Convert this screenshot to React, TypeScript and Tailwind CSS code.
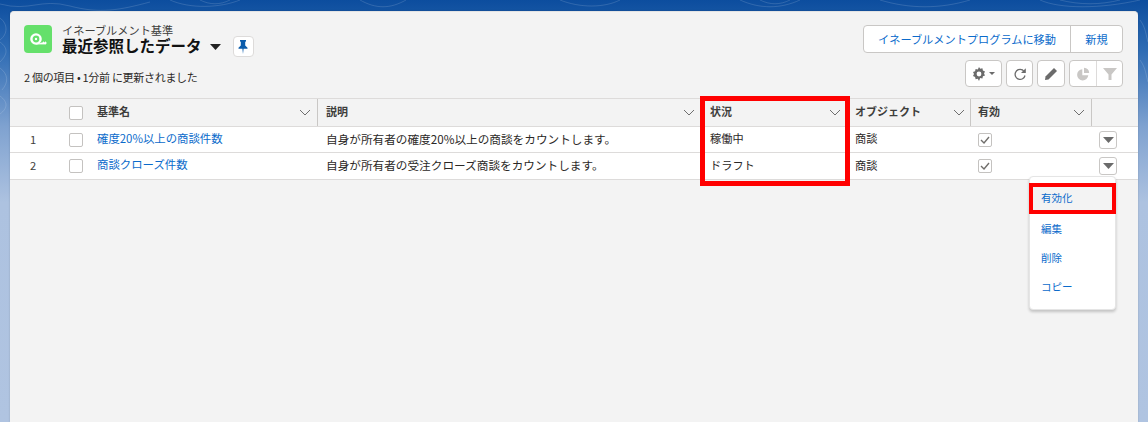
import React from "react";

const font = { fontFamily: '"Noto Sans CJK JP", "Noto Sans", sans-serif' };

function Chevron() {
  return (
    <svg width="12" height="7" viewBox="0 0 12 7" className="shrink-0">
      <path d="M1 1l5 5 5-5" fill="none" stroke="#6f6f6f" strokeWidth="1" />
    </svg>
  );
}

function Head({ label, className = "" }: { label: string; className?: string }) {
  return (
    <div className={`flex items-center justify-between font-bold text-[11px] text-[#3e3e3c] border-r border-[#c9c7c5] ${className}`}>
      <span className="-mt-[2px]">{label}</span>
      <Chevron />
    </div>
  );
}

function Box({ checked }: { checked?: boolean }) {
  return (
    <div className="w-[14px] h-[14px] bg-white border border-[#c4c2c0] rounded-[2px] flex items-center justify-center">
      {checked && (
        <svg width="10" height="8" viewBox="0 0 10 8">
          <path d="M1 4l3 3 5-6" fill="none" stroke="#706e6b" strokeWidth="1.4" />
        </svg>
      )}
    </div>
  );
}

function RowMenu() {
  return (
    <div className="w-[18px] h-[18px] bg-white border border-[#c9c7c5] rounded-[3px] flex items-center justify-center">
      <svg width="11" height="6" viewBox="0 0 11 6">
        <path d="M0 0h11L5.5 6z" fill="#6b6b6b" />
      </svg>
    </div>
  );
}

const cols = "grid grid-cols-[50px_28px_230px_383px_147px_123px_121px_1fr]";

function Row({ n, name, desc, status, tall }: { n: number; name: string; desc: string; status: string; tall?: boolean }) {
  return (
    <div className={`${cols} ${tall ? "h-[27px]" : "h-[26px]"} bg-white border-b border-[#dddbda] items-center text-[11.2px] text-[#2b2826]`}>
      <div className="pl-[20px] pb-[1px] text-[#3e3e3c]">{n}</div>
      <div className="pl-[9px]"><Box /></div>
      <a className="pl-[9px] pb-[2px] text-[11.4px] text-[#0b6bcb]">{name}</a>
      <div className="pl-[8px] pb-[2px] text-[11.65px]">{desc}</div>
      <div className="pl-[9px] pb-[2px]">{status}</div>
      <div className="pl-[7px] pb-[2px]">商談</div>
      <div className="pl-[7px]"><Box checked /></div>
      <div className="flex justify-end pr-[21px]"><RowMenu /></div>
    </div>
  );
}

const tool = "h-[27px] bg-white border border-[#c9c7c5] rounded-[4px] flex items-center justify-center";

export default function App() {
  return (
    <div
      style={font}
      className="relative w-[1148px] h-[422px] overflow-hidden pt-[11px] pl-[10px] pr-[10px] bg-[linear-gradient(180deg,#0c4d9e_0%,#2f6cb4_12%,#7fa2d0_30%,#adc2e0_48%,#b0c4e1_100%)]"
    >
      <svg className="absolute left-0 top-0" width="1148" height="120" viewBox="0 0 1148 120" fill="none" stroke="#ffffff" strokeOpacity="0.14" strokeWidth="1">
        <path d="M0 4c30 8 40-6 70 2s50 4 80-4M170 0c20 9 50 8 70 0M200 0c10 5 20 5 30 0M360 0c16 9 30 9 46 0M560 0c20 8 44 8 60 0M740 0c20 9 40 9 60 0M760 0c10 5 20 5 30 0M880 0c30 9 60 9 90 0M1040 0c20 9 60 9 100 0M1060 0c20 5 40 5 60 0" />
        <path d="M0 40c8-6 8-16 0-22M0 62c8-8 8-14 0-20M2 90c7-8 6-16-2-22M0 114c8-6 8-12 0-18M1140 20c6 8 6 16 8 22M1140 60c6 8 6 16 8 22" />
      </svg>

      <div className="relative h-[411px] bg-[#f3f3f3] rounded-t-[4px] border-t border-[#e4e4e4] shadow-[0_0_2px_rgba(0,0,0,0.2)]">
        <div className="h-[86px] flex justify-between pl-[14px] pr-[15px] pt-[13px]">
          <div>
            <div className="flex">
              <div className="w-[28px] h-[28px] rounded-[4px] bg-[#65e06b] flex items-center justify-center">
                <svg width="20" height="20" viewBox="0 0 20 20">
                  <circle cx="8" cy="10" r="4.6" fill="none" stroke="#fff" strokeWidth="2.4" />
                  <circle cx="8" cy="10" r="1.2" fill="#fff" />
                  <path d="M8 15h10v-2h-1v1h-1v-1h-1v1h-2" fill="#fff" stroke="#fff" strokeWidth="0.8" />
                </svg>
              </div>
              <div className="ml-[10px] -mt-[1px]">
                <div className="text-[11.2px] leading-[12px] text-[#3e3e3c]">イネーブルメント基準</div>
                <div className="flex items-center">
                  <span className="self-start text-[15.5px] leading-[18px] font-bold text-[#111]">最近参照したデータ</span>
                  <svg className="ml-[8px]" width="11" height="6" viewBox="0 0 11 6">
                    <path d="M0 0h11L5.5 6z" fill="#222" />
                  </svg>
                  <div className="ml-[12px] w-[21px] h-[21px] bg-white border border-[#dddbda] rounded-[4px] flex items-center justify-center">
                    <svg width="10" height="14" viewBox="0 0 10 14">
                      <path d="M2 0h6v1.2L7.2 2v3.4l2.3 2.4v1H5.6L5 14l-.6-5.2H.5v-1l2.3-2.4V2L2 1.2z" fill="#0b5cab" />
                    </svg>
                  </div>
                </div>
              </div>
            </div>
            <div className="mt-[12px] text-[11px] tracking-[-0.3px] leading-[16px] text-[#2b2826]">2 個の項目 • 1分前 に更新されました</div>
          </div>

          <div className="flex flex-col items-end">
            <div className="flex h-[28px] bg-white border border-[#c9c7c5] rounded-[4px] text-[11.2px] text-[#0b6bcb]">
              <div className="w-[207px] flex items-center justify-center border-r border-[#c9c7c5]">イネーブルメントプログラムに移動</div>
              <div className="w-[51px] flex items-center justify-center">新規</div>
            </div>
            <div className="flex mt-[7px] gap-[4px]">
              <div className={`${tool} w-[37px] gap-[3px]`}>
                <svg width="14" height="14" viewBox="0 0 14 14">
                  <path d="M7 0l1.2 1.8 2.2-.5.5 2.2 2.1.9-1 2 1 2-2.1.9-.5 2.2-2.2-.5L7 14l-1.2-2.2-2.2.5-.5-2.2L1 9.1l1-2-1-2 2.1-.9.5-2.2 2.2.5z" fill="#6b6b6b" />
                  <circle cx="7" cy="7" r="2.4" fill="#fff" />
                </svg>
                <svg width="6" height="3" viewBox="0 0 6 3"><path d="M0 0h6L3 3z" fill="#6b6b6b" /></svg>
              </div>
              <div className={`${tool} w-[27px]`}>
                <svg width="14" height="14" viewBox="0 0 14 14" fill="none">
                  <path d="M12 8.5A5 5 0 1 1 9.4 2.9L11 4.6" stroke="#6b6b6b" strokeWidth="1.3" />
                  <path d="M12.8 1.2V6H8z" fill="#6b6b6b" />
                </svg>
              </div>
              <div className={`${tool} w-[28px]`}>
                <svg width="14" height="14" viewBox="0 0 14 14">
                  <path d="M10 1l3 3-8.5 8.5L1 13l.5-3.5z" fill="#6b6b6b" />
                </svg>
              </div>
              <div className={`${tool} w-[54px]`}>
                <div className="w-[27px] h-full flex items-center justify-center border-r border-[#dddbda]">
                  <svg width="14" height="14" viewBox="0 0 14 14">
                    <path d="M6.3 2.2v6h6A5.6 5.6 0 1 1 6.3 2.2z" fill="#c9c7c5" />
                    <path d="M8 .8A5.6 5.6 0 0 1 13.2 6H8z" fill="#c9c7c5" />
                  </svg>
                </div>
                <div className="flex-1 flex items-center justify-center">
                  <svg width="14" height="14" viewBox="0 0 14 14">
                    <path d="M0 1h14L8.5 7.5V13h-3V7.5z" fill="#c9c7c5" />
                  </svg>
                </div>
              </div>
            </div>
          </div>
        </div>

        <div className={`${cols} h-[29px] bg-[#f3f3f3] border-y border-[#dddbda]`}>
          <div />
          <div className="pl-[9px] flex items-center"><Box /></div>
          <Head label="基準名" className="pl-[9px] pr-[6px]" />
          <Head label="説明" className="pl-[8px] pr-[5px]" />
          <Head label="状況" className="pl-[9px] pr-[6px]" />
          <Head label="オブジェクト" className="pl-[7px] pr-[5px]" />
          <Head label="有効" className="pl-[7px] pr-[6px]" />
          <div />
        </div>
        <Row n={1} name="確度20%以上の商談件数" desc="自身が所有者の確度20%以上の商談をカウントします。" status="稼働中" />
        <Row n={2} name="商談クローズ件数" desc="自身が所有者の受注クローズ商談をカウントします。" status="ドラフト" tall />

        <div className="absolute left-[690px] top-[84px] w-[150px] h-[90px] border-[5px] border-[#ff0000]" />

        <div className="absolute left-[1019px] top-[164px] w-[87px] h-[134px] bg-white rounded-[4px] border border-[#e5e5e5] shadow-[0_2px_3px_rgba(0,0,0,0.2)] text-[10.5px] text-[#0b6bcb]">
          <div className="mt-[6px] -mx-px h-[31px] bg-[#f3f3f3] border-[4px] border-[#ff0000] flex items-center pl-[8px] pb-[2px]">有効化</div>
          <div className="pl-[11px] leading-[29px]">編集</div>
          <div className="pl-[11px] leading-[29px]">削除</div>
          <div className="pl-[11px] leading-[29px]">コピー</div>
        </div>
      </div>
    </div>
  );
}
